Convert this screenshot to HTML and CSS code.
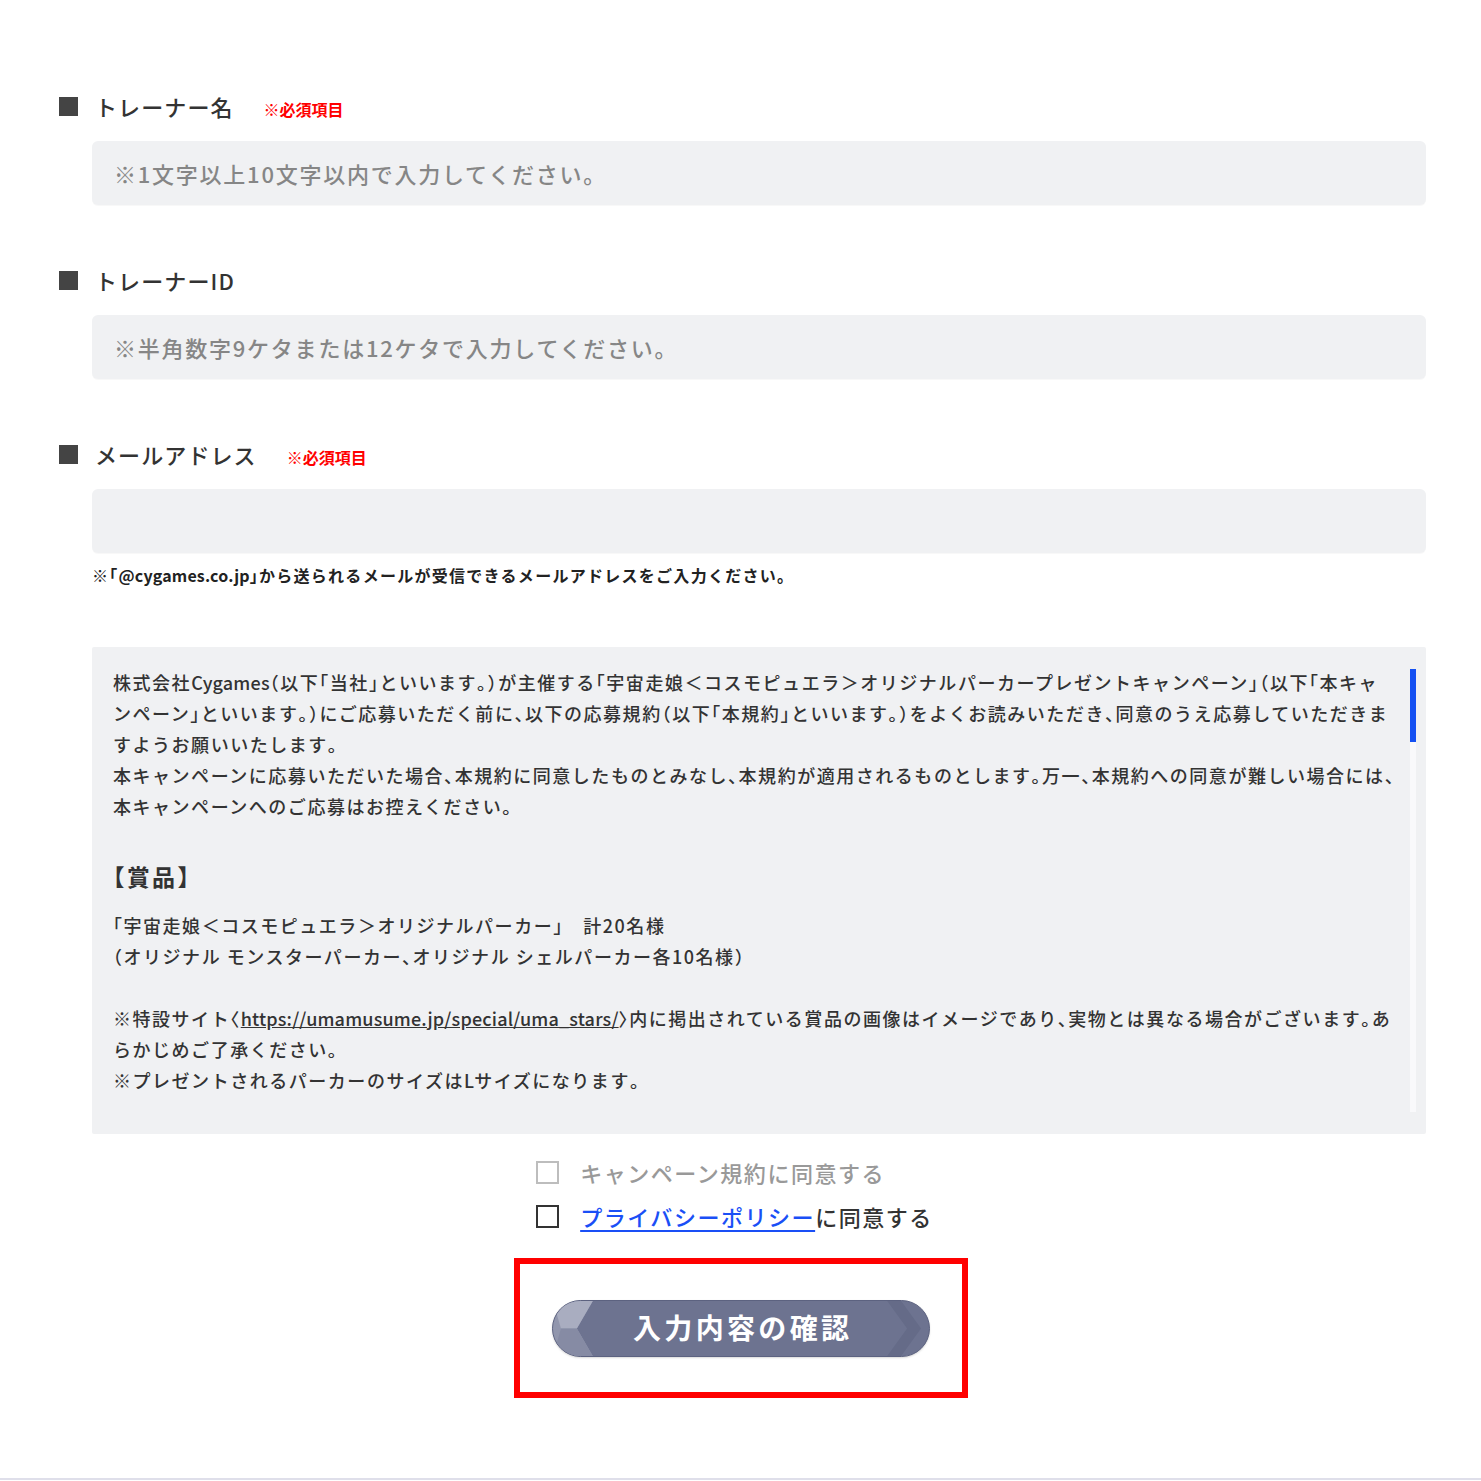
FILE: index.html
```html
<!DOCTYPE html>
<html lang="ja">
<head>
<meta charset="utf-8">
<title>応募フォーム</title>
<link rel="stylesheet" href="styles.css">
</head>
<body>
<main class="page">
  <section class="field">
    <div class="field-head">
      <span class="mark"></span>
      <span class="label">トレーナー名</span>
      <span class="req">※必須項目</span>
    </div>
    <input class="text-input" type="text" placeholder="※1文字以上10文字以内で入力してください。">
  </section>

  <section class="field">
    <div class="field-head">
      <span class="mark"></span>
      <span class="label">トレーナーID</span>
    </div>
    <input class="text-input" type="text" placeholder="※半角数字9ケタまたは12ケタで入力してください。">
  </section>

  <section class="field field-last">
    <div class="field-head">
      <span class="mark"></span>
      <span class="label">メールアドレス</span>
      <span class="req">※必須項目</span>
    </div>
    <input class="text-input" type="email">
    <p class="mail-note">※<span class="h">「</span><span class="en">@cygames.co.jp</span><span class="h">」</span>から送られるメールが受信できるメールアドレスをご入力ください<span class="h">。</span></p>
  </section>

  <div class="terms">
    <div class="terms-body">
      <p>株式会社<span class="en">Cygames</span><span class="h">（</span>以下<span class="h">「</span>当社<span class="h">」</span>といいます<span class="h">。）</span>が主催する<span class="h">「</span>宇宙走娘＜コスモピュエラ＞オリジナルパーカープレゼントキャンペーン<span class="h">」（</span>以下<span class="h">「</span>本キャ<br>ンペーン<span class="h">」</span>といいます<span class="h">。）</span>にご応募いただく前に<span class="h">、</span>以下の応募規約<span class="h">（</span>以下<span class="h">「</span>本規約<span class="h">」</span>といいます<span class="h">。）</span>をよくお読みいただき<span class="h">、</span>同意のうえ応募していただきま<br>すようお願いいたします<span class="h">。</span><br>本キャンペーンに応募いただいた場合<span class="h">、</span>本規約に同意したものとみなし<span class="h">、</span>本規約が適用されるものとします<span class="h">。</span>万一<span class="h">、</span>本規約への同意が難しい場合には<span class="h">、</span><br>本キャンペーンへのご応募はお控えください<span class="h">。</span></p>
      <h3 class="terms-title"><span class="h">【</span>賞品<span class="h">】</span></h3>
      <p><span class="h">「</span>宇宙走娘＜コスモピュエラ＞オリジナルパーカー<span class="h">」</span>　計20名様<br><span class="h">（</span>オリジナル モンスターパーカー<span class="h">、</span>オリジナル シェルパーカー各10名様<span class="h">）</span></p>
      <p class="gap">※特設サイト<span class="h">〈</span><a class="terms-link en" href="#">https://umamusume.jp/special/uma_stars/</a><span class="h">〉</span>内に掲出されている賞品の画像はイメージであり<span class="h">、</span>実物とは異なる場合がございます<span class="h">。</span>あ<br>らかじめご了承ください<span class="h">。</span><br>※プレゼントされるパーカーのサイズは<span class="en">L</span>サイズになります<span class="h">。</span></p>
    </div>
    <div class="scrollbar"><div class="thumb"></div></div>
  </div>

  <div class="agree">
    <div class="agree-list">
      <label class="agree-row disabled"><span class="box"></span><span>キャンペーン規約に同意する</span></label>
      <label class="agree-row"><span class="box"></span><span><a class="policy-link" href="#">プライバシーポリシー</a>に同意する</span></label>
    </div>
  </div>

  <div class="submit-area">
    <div class="highlight">
      <button class="submit" type="button">
        <svg class="submit-deco" viewBox="0 0 378 57" preserveAspectRatio="none" aria-hidden="true">
          <polygon points="0,0 40,0 24,28.5 40,57 0,57" fill="#9196ad"/>
          <polygon points="0,0 40,0 24,28.5 8,28.5" fill="#a9adc0"/>
          <polygon points="8,28.5 24,28.5 40,57 0,57" fill="#868ba4"/>
          <polygon points="336,0 350,0 370,28.5 350,57 336,57 356,28.5" fill="#656b88"/>
        </svg>
        <span class="submit-text">入力内容の確認</span>
      </button>
    </div>
  </div>
</main>
<footer class="footer-line"></footer>
</body>
</html>
```

FILE: styles.css
```css
* { box-sizing: border-box; }

html, body {
  margin: 0;
  padding: 0;
  background: #ffffff;
}

body {
  font-family: "Noto Sans CJK JP", "Noto Sans", sans-serif;
  color: #333333;
}

.page {
  padding: 91px 55px 0 59px;
}

.field {
  margin-bottom: 60px;
}

.field-last {
  margin-bottom: 0;
}

.field-head {
  display: flex;
  align-items: center;
  height: 30px;
}

.mark {
  width: 19px;
  height: 19px;
  background: #444444;
  margin-right: 17px;
  flex: none;
}

.label {
  font-size: 22px;
  line-height: 30px;
  font-weight: 500;
  letter-spacing: 0.05em;
  color: #333333;
  margin-right: 30px;
}

.req {
  font-size: 16px;
  line-height: 20px;
  font-weight: 700;
  color: #ff0000;
  margin-top: 5px;
}

.text-input {
  display: block;
  width: calc(100% - 33px);
  margin: 20px 0 0 33px;
  height: 64px;
  border: none;
  border-radius: 6px;
  background: #f0f1f3;
  box-shadow: 0 1px 1px rgba(0, 0, 0, 0.03);
  padding: 0 22px;
  font-family: inherit;
  font-size: 22px;
  font-weight: 500;
  letter-spacing: 0.08em;
  color: #333333;
  outline: none;
}

.text-input::placeholder {
  color: #868686;
}

/* half-width punctuation */
.h {
  font-feature-settings: "halt";
}

.en {
  letter-spacing: 0.01em;
}

.mail-note {
  margin: 11px 0 0 33px;
  font-size: 16px;
  line-height: 22px;
  font-weight: 700;
  letter-spacing: 0.08em;
  color: #222222;
}

.terms {
  position: relative;
  margin: 61px 0 0 33px;
  height: 487px;
  background: #f0f1f3;
  border-radius: 2px;
  overflow: hidden;
}

.terms-body {
  padding: 20px 30px 0 21px;
  font-size: 18px;
  line-height: 31px;
  font-weight: 500;
  letter-spacing: 0.085em;
  color: #333333;
  white-space: nowrap;
}

.terms-body p {
  margin: 0;
}

.terms-body p.gap {
  margin-top: 31px;
}

.terms-title {
  margin: 39px 0 18px;
  font-size: 23px;
  line-height: 31px;
  font-weight: 700;
  letter-spacing: 0.1em;
}

.terms-link {
  color: #333333;
  text-decoration: underline;
}

.scrollbar {
  position: absolute;
  top: 22px;
  bottom: 22px;
  right: 10px;
  width: 6px;
  background: #f9f9fb;
}

.thumb {
  height: 73px;
  background: #1450f2;
}

.agree {
  display: flex;
  justify-content: center;
  margin-top: 21px;
  padding-left: 24px;
}

.agree-list {
  display: flex;
  flex-direction: column;
  gap: 10px;
  margin-right: 40px;
}

.agree-row {
  display: flex;
  align-items: center;
  height: 34px;
  font-size: 22px;
  font-weight: 500;
  letter-spacing: 0.07em;
  color: #333333;
}

.agree-row .box {
  width: 23px;
  height: 23px;
  border: 2px solid #333333;
  background: #ffffff;
  margin-right: 21px;
  flex: none;
}

.agree-row.disabled {
  color: #999999;
}

.agree-row.disabled .box {
  border-color: #bdbdbd;
}

.policy-link {
  color: #1a4ff6;
  text-decoration: underline;
  text-underline-offset: 4px;
}

.submit-area {
  display: flex;
  justify-content: center;
  margin-top: 25px;
  padding-right: 3px;
}

.highlight {
  border: 6px solid #ff0000;
  width: 454px;
  height: 140px;
  display: flex;
  align-items: center;
  justify-content: center;
}

.submit {
  position: relative;
  width: 378px;
  height: 57px;
  border-radius: 29px;
  border: 1px solid #5c6280;
  background: #6d7390;
  overflow: hidden;
  padding: 0;
  cursor: pointer;
  box-shadow: 0 1px 2px rgba(0, 0, 0, 0.15);
}

.submit-deco {
  position: absolute;
  left: 0;
  top: 0;
  width: 100%;
  height: 100%;
}

.submit-text {
  position: relative;
  top: -1px;
  font-family: "Noto Sans CJK JP", sans-serif;
  font-size: 28px;
  font-weight: 700;
  letter-spacing: 0.12em;
  color: #ffffff;
  margin-right: -0.12em;
}

.footer-line {
  margin-top: 80px;
  height: 2px;
  background: #dfdfea;
}
```
